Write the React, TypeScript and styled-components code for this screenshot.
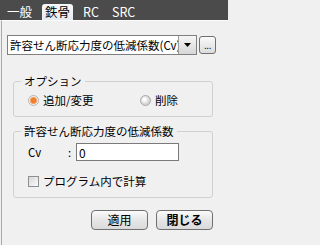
import React, { useState } from 'react';
import styled, { createGlobalStyle } from 'styled-components';

const GlobalStyle = createGlobalStyle`
  html, body {
    margin: 0;
    padding: 0;
    background: #f0f0f0;
  }
  body {
    font-family: "Noto Sans CJK JP", "Liberation Sans", sans-serif;
    font-size: 11.5px;
    color: #000;
  }
`;

// 全体
const Window = styled.div`
  width: 228px;
  height: 245px;
  display: flex;
  flex-direction: column;
  background: #f0f0f0;
  overflow: hidden;
`;

// タブ
const TabBar = styled.div`
  height: 20px;
  flex: none;
  background: #4b4b4b;
  display: flex;
  align-items: flex-end;
  padding-left: 4px;
  gap: 7px;
`;

const Tab = styled.div<{ $active?: boolean }>`
  height: 16px;
  padding: 0 3px;
  line-height: 15px;
  font-size: 12.5px;
  color: ${(p) => (p.$active ? '#000' : '#fff')};
  background: ${(p) => (p.$active ? 'linear-gradient(#f6f9fb, #e3ebf0)' : 'transparent')};
  border-radius: 3px 3px 0 0;
  cursor: default;
`;

const Panel = styled.div`
  flex: 1;
  border-left: 1px solid #a9a9a9;
  border-top: 1px solid #fbfbfb;
  margin-left: 1px;
  padding: 14px 0 0 5px;
  display: flex;
  flex-direction: column;
`;

// コンボボックス
const SelectRow = styled.div`
  display: flex;
  align-items: center;
  gap: 2px;
  height: 20px;
`;

const Select = styled.div`
  width: 188px;
  height: 18px;
  border: 1px solid #7f7f7f;
  background: #fff;
  display: flex;
  align-items: stretch;
`;

const SelectText = styled.div`
  flex: 1;
  padding-left: 2px;
  line-height: 18px;
  font-size: 11.5px;
  white-space: nowrap;
  overflow: hidden;
`;

const DropButton = styled.div`
  width: 17px;
  border-left: 1px solid #9a9a9a;
  background: linear-gradient(#f6f6f6, #d6d6d6);
  display: flex;
  align-items: center;
  justify-content: center;
`;

const DotsButton = styled.div`
  width: 15px;
  height: 16px;
  border: 1px solid #707070;
  border-radius: 3px;
  background: linear-gradient(#fafafa, #dcdcdc);
  font-family: "Liberation Sans", sans-serif;
  font-size: 10px;
  line-height: 17px;
  text-align: center;
  letter-spacing: -0.5px;
  overflow: hidden;
`;

// グループボックス
const Group = styled.fieldset<{ $top: number; $gap: number }>`
  width: 184px;
  margin: ${(p) => p.$top}px 0 0 6px;
  padding: 5px 0 9px 14px;
  border: 1px solid #d0d0d0;
  border-radius: 3px;
  display: flex;
  flex-direction: column;
  gap: ${(p) => p.$gap}px;
  min-width: 0;
`;

const Legend = styled.legend`
  margin-left: -7px;
  padding: 0 3px;
  font-size: 11.5px;
  line-height: 14px;
`;

const Row = styled.div`
  display: flex;
  align-items: center;
  height: 14px;
`;

const RadioLabel = styled.label<{ $width?: number }>`
  display: flex;
  align-items: center;
  gap: 4px;
  width: ${(p) => (p.$width ? `${p.$width}px` : 'auto')};
  cursor: default;
`;

const RadioDot = styled.span<{ $checked: boolean }>`
  width: 11px;
  height: 11px;
  border-radius: 50%;
  box-sizing: border-box;
  border: 1px solid ${(p) => (p.$checked ? '#b5b5b5' : '#a8a8a8')};
  background: ${(p) =>
    p.$checked
      ? 'radial-gradient(circle at 50% 50%, #ef7f2e 0 2.5px, #f6b27c 3.3px, #f4f4f4 4.2px)'
      : 'radial-gradient(circle at 40% 40%, #ffffff 0 1px, #d4d4d4 4.5px)'};
`;

const CvRow = styled.div`
  display: flex;
  align-items: center;
  height: 18px;
`;

const CvLabel = styled.span`
  width: 40px;
`;

const Colon = styled.span`
  width: 8px;
`;

const TextInput = styled.input`
  width: 97px;
  height: 16px;
  box-sizing: content-box;
  margin: 0;
  padding: 0 2px;
  border: 1px solid #7a7a7a;
  font-family: "Noto Sans CJK JP", "Liberation Sans", sans-serif;
  font-size: 12px;
  outline: none;
`;

const CheckLabel = styled.label`
  display: flex;
  align-items: center;
  gap: 4px;
  cursor: default;
`;

const CheckBox = styled.span<{ $checked: boolean }>`
  width: 11px;
  height: 11px;
  box-sizing: border-box;
  border: 1px solid #8e8f8f;
  background: linear-gradient(135deg, #d8d8d8, #fbfbfb);
  position: relative;
  &::after {
    content: ${(p) => (p.$checked ? "'✓'" : "''")};
    position: absolute;
    left: 1px;
    top: -3px;
    font-size: 10px;
  }
`;

// ボタン
const ButtonRow = styled.div`
  display: flex;
  justify-content: flex-end;
  gap: 8px;
  width: 206px;
  margin-top: 12px;
`;

const Button = styled.button<{ $bold?: boolean }>`
  width: 57px;
  height: 20px;
  margin: 0;
  padding: 0;
  border: 1px solid #707070;
  border-radius: 4px;
  background: linear-gradient(#fbfbfb, #e6e6e6 50%, #dadada);
  font-family: "Noto Sans CJK JP", "Liberation Sans", sans-serif;
  font-size: 12px;
  font-weight: ${(p) => (p.$bold ? 'bold' : 'normal')};
  color: #000;
  line-height: 18px;
`;

const tabs = ['一般', '鉄骨', 'RC', 'SRC'];

function App() {
  const [tab, setTab] = useState('鉄骨');
  const [mode, setMode] = useState('add');
  const [cv, setCv] = useState('0');
  const [auto, setAuto] = useState(false);

  return (
    <>
      <GlobalStyle />
      <Window>
        <TabBar>
          {tabs.map((t) => (
            <Tab key={t} $active={tab === t} onClick={() => setTab(t)}>
              {t}
            </Tab>
          ))}
        </TabBar>
        <Panel>
          <SelectRow>
            <Select>
              <SelectText>許容せん断応力度の低減係数(Cv)</SelectText>
              <DropButton>
                <svg width="7" height="4" viewBox="0 0 7 4">
                  <path d="M0 0h7L3.5 4z" fill="#000" />
                </svg>
              </DropButton>
            </Select>
            <DotsButton>...</DotsButton>
          </SelectRow>

          <Group $top={19} $gap={0}>
            <Legend>オプション</Legend>
            <Row>
              <RadioLabel $width={112} onClick={() => setMode('add')}>
                <RadioDot $checked={mode === 'add'} />
                追加/変更
              </RadioLabel>
              <RadioLabel onClick={() => setMode('del')}>
                <RadioDot $checked={mode === 'del'} />
                削除
              </RadioLabel>
            </Row>
          </Group>

          <Group $top={7} $gap={13}>
            <Legend>許容せん断応力度の低減係数</Legend>
            <CvRow>
              <CvLabel>Cv</CvLabel>
              <Colon>:</Colon>
              <TextInput value={cv} onChange={(e) => setCv(e.target.value)} />
            </CvRow>
            <Row>
              <CheckLabel onClick={() => setAuto(!auto)}>
                <CheckBox $checked={auto} />
                プログラム内で計算
              </CheckLabel>
            </Row>
          </Group>

          <ButtonRow>
            <Button>適用</Button>
            <Button $bold>閉じる</Button>
          </ButtonRow>
        </Panel>
      </Window>
    </>
  );
}

export default App;
